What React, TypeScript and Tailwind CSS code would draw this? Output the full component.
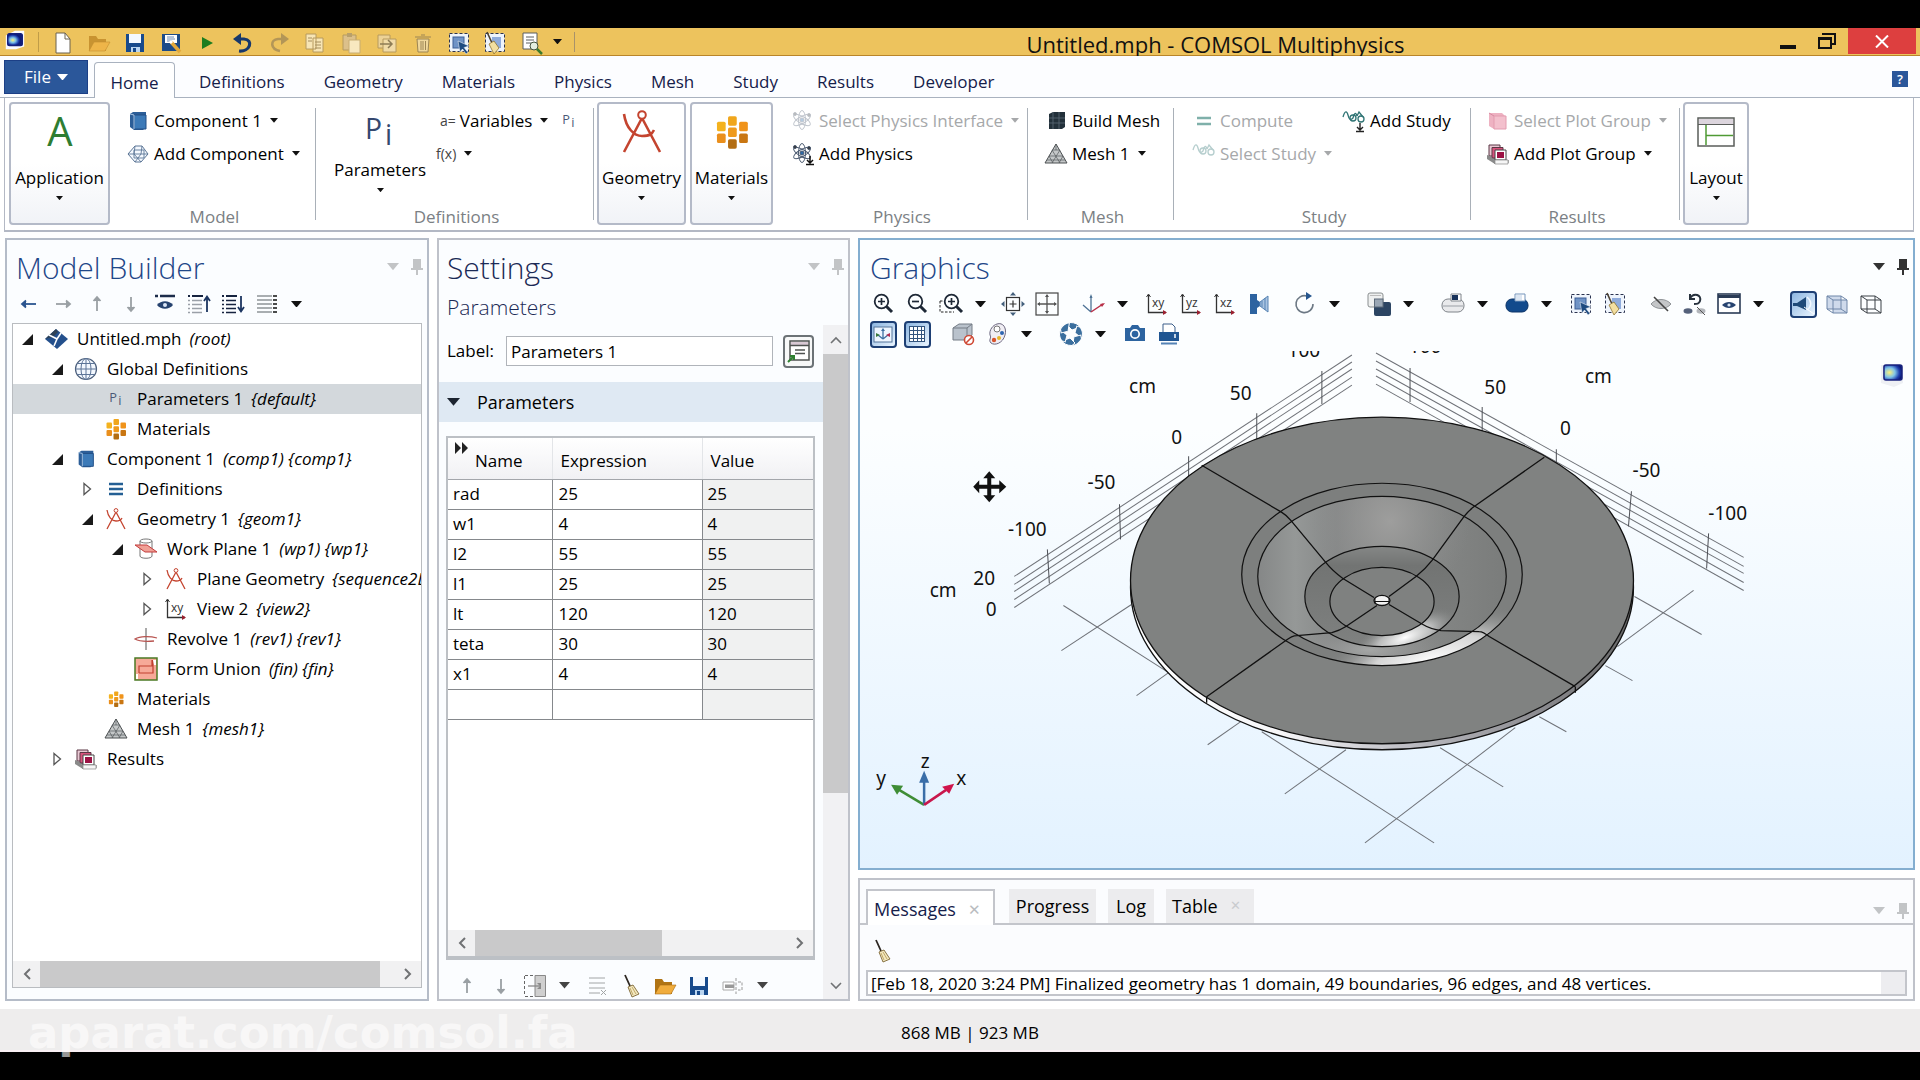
import React from "react";

type Kids = { children?: React.ReactNode };

/* ---------- icon primitives ---------- */

function Ic({ s = 24, children }: Kids & { s?: number }) {
  return (
    <svg width={s} height={s} viewBox="0 0 24 24" fill="none" className="shrink-0 overflow-visible" aria-hidden="true">
      {children}
    </svg>
  );
}

function Caret({ c = "#111", w = 10 }: { c?: string; w?: number }) {
  return (
    <svg width={w} height={w * 0.6} viewBox="0 0 10 6" className="shrink-0" aria-hidden="true">
      <path d="M0 0H10L5 6Z" fill={c} />
    </svg>
  );
}

const iconFont = "Open Sans, sans-serif";

const NewFile = () => (
  <Ic><path d="M5 2H14L19 8V22H5Z" fill="#fff" stroke="#6b6250" /><path d="M14 2V8H19" stroke="#6b6250" /></Ic>
);
const Folder = ({ o = 1 }: { o?: number }) => (
  <Ic><g opacity={o}><path d="M2 5H9L11 8H19V20H2Z" fill="#b07414" /><path d="M7 11H23L18 20H2Z" fill="#f0ac3c" stroke="#a86c10" strokeWidth=".6" /></g></Ic>
);
const Save = () => (
  <Ic><path d="M3 3H21V21H3Z" fill="#174a8c" /><path d="M6 3H18V12H6Z" fill="#f4f9ff" /><path d="M8 16H17V21H8Z" fill="#b9d4f0" /><path d="M10 17H13V21H10Z" fill="#174a8c" /></Ic>
);
const SaveAs = () => (
  <Ic><path d="M3 3H21V20H3Z" fill="#1c4b88" /><path d="M6 4H18V12H6Z" fill="#fff" /><path d="M8 6H15M8 8H16M8 10H13" stroke="#6d8cb5" /><path d="M12 11L21 21" stroke="#e2a83b" strokeWidth="3.5" /><path d="M11 10L13 12" stroke="#fff" strokeWidth="3" /></Ic>
);
const Play = () => (<Ic><path d="M7 6L18 12L7 18Z" fill="#1d7d1f" /></Ic>);
const Undo = () => (
  <Ic><path d="M8 20C19 21 23 9 13 8H7" stroke="#17386c" strokeWidth="3.2" /><path d="M10 2L2 8L10 14Z" fill="#17386c" /></Ic>
);
const Redo = () => (
  <Ic><path d="M13 20C3 18 3 9 11 8H16" stroke="#b39657" strokeWidth="2.6" /><path d="M14 2L22 8L14 14Z" fill="#b39657" /></Ic>
);
const Copy = () => (
  <Ic><path d="M3 3H13V18H3ZM10 7H20V21H10Z" fill="#f7e5b5" stroke="#b69a5e" /><path d="M5 7H9M5 10H9M12 11H18M12 14H18M12 17H18" stroke="#a58e5e" /></Ic>
);
const Paste = () => (
  <Ic><path d="M4 4H17V19H4Z" fill="#dcc08a" stroke="#b69a5e" /><path d="M8 2H13V6H8Z" fill="#b9a06a" /><path d="M10 9H21V22H10Z" fill="#f8e8c0" stroke="#c8ad72" /></Ic>
);
const Insert = () => (
  <Ic><path d="M3 4H15V17H3Z" fill="#ecd296" stroke="#b69a5e" /><path d="M8 8H21V21H8Z" fill="#f1dba7" stroke="#b69a5e" /><path d="M5 13H16M13 9L17 13L13 17" stroke="#8d7c55" strokeWidth="1.5" /></Ic>
);
const Trash = () => (
  <Ic><path d="M6 8H18L17 21H7Z" fill="#efd79b" stroke="#9c8554" /><path d="M4 6H20M10 4H14M10 10V19M12 10V19M14.500 10V19" stroke="#9c8554" /></Ic>
);
const SelectBox = () => (
  <Ic><rect x="2.500" y="2.500" width="19" height="18" fill="#eef4fc" stroke="#2a3350" strokeDasharray="3 2" /><rect x="6" y="6" width="11" height="11" fill="#6f93c6" stroke="#3c5f96" /><path d="M11 10L22 15L17 16.500L21 21.500L19 23L15.500 18L13 21Z" fill="#1d4a80" stroke="#fff" strokeWidth=".5" /></Ic>
);
const ClearSel = () => (
  <Ic><rect x="2.500" y="2.500" width="19" height="18" fill="#eef4fc" stroke="#2a3350" strokeDasharray="3 2" /><rect x="9" y="6" width="9" height="11" fill="#8fabdb" /><path d="M4 1L9 12" stroke="#4a4030" strokeWidth="1.600" /><path d="M6 13L11 10L16 17L11 23Z" fill="#f3dfa0" stroke="#8f7533" strokeWidth=".8" /></Ic>
);
const Find = () => (
  <Ic><path d="M4 2H18V18H4Z" fill="#fff" stroke="#5a5f60" /><path d="M7 6H15M7 9H15M7 12H12" stroke="#5a5f60" /><circle cx="15" cy="15" r="4" fill="#e4eee0" stroke="#43523c" /><path d="M18 18L23 23" stroke="#3c7a2c" strokeWidth="2.500" /></Ic>
);
const AppLogo = ({ s = 24 }: { s?: number }) => (
  <Ic s={s}>
    <defs><radialGradient id="lg" cx=".35" cy=".55"><stop offset="0" stopColor="#fdf07a" /><stop offset=".4" stopColor="#7fc4e8" /><stop offset=".8" stopColor="#1f3fae" /><stop offset="1" stopColor="#0e1c78" /></radialGradient></defs>
    <path d="M2 7L12 2H22V19L13 22H2Z" fill="#fbfbff" /><rect x="4" y="5" width="16" height="13" rx="2" fill="url(#lg)" stroke="#17217c" strokeWidth="1.500" />
  </Ic>
);

const Cube = ({ s = 24 }: { s?: number }) => (
  <Ic s={s}><path d="M4 5L7 3H20V18L17 21H8L4 18Z" fill="#2c5e98" /><path d="M8 6H20V20H8Z" fill="#3c7ab8" stroke="#224f86" /><path d="M4 5L8 6V20" stroke="#a9c6e6" /></Ic>
);
const AddComp = () => (
  <Ic><path d="M2 12L9 4H16L22 12L15 20H9Z" fill="#f5f9ff" stroke="#5c7696" /><path d="M9 4L8 12L15 20M16 4L15 12L9 20M2 12H22M8 8H18V16H8Z" stroke="#5c7696" strokeWidth=".9" /></Ic>
);
const Pi = ({ s = 24, c = "#4a5877" }: { s?: number; c?: string }) => (
  <svg width={s} height={s} viewBox="0 0 24 24" aria-hidden="true" className="shrink-0 overflow-visible">
    <text x="3" y="16" fontSize="17" fill={c} fontFamily={iconFont}>P</text>
    <text x="15" y="20" fontSize="17" fill={c} fontFamily={iconFont}>i</text>
  </svg>
);
const Compass = ({ s = 24 }: { s?: number }) => (
  <Ic s={s}><path d="M12 5L3 22M12 5L21 22M3 3C4 10 8 14 12 14C16 14 17 13 18 11" stroke="#c4442f" strokeWidth="1.300" /><circle cx="12" cy="3.500" r="1.900" fill="#fff" stroke="#c4442f" /></Ic>
);
const Mats = ({ s = 24 }: { s?: number }) => (
  <Ic s={s}>
    <rect x="9.500" y="2" width="5.500" height="6" rx="1" fill="#f0a61c" /><rect x="9.500" y="9.200" width="5.500" height="6" rx="1" fill="#ef9a1c" /><rect x="9.500" y="16.500" width="5.500" height="6" rx="1" fill="#b36d12" />
    <rect x="2.500" y="5.500" width="5.500" height="6" rx="1" fill="#f4b21e" /><rect x="2.500" y="13" width="5.500" height="6" rx="1" fill="#ea8f1c" />
    <rect x="16.500" y="5.500" width="5.500" height="6" rx="1" fill="#f0931a" /><rect x="16.500" y="13" width="5.500" height="6" rx="1" fill="#c97612" />
  </Ic>
);
const Atom = ({ o = 1, add = false }: { o?: number; add?: boolean }) => (
  <Ic><g opacity={o} stroke="#4b5a70" strokeWidth="1"><ellipse cx="11" cy="11" rx="3.500" ry="9.500" /><ellipse cx="11" cy="11" rx="3.500" ry="9.500" transform="rotate(60 11 11)" /><ellipse cx="11" cy="11" rx="3.500" ry="9.500" transform="rotate(120 11 11)" /><circle cx="11" cy="11" r="2" fill="#2c6aa8" /><circle cx="4" cy="5" r="1.500" fill="#333" /><circle cx="18" cy="6" r="1.500" fill="#333" /></g>
    {add && <path d="M19 14V20M16 18L19 21L22 18M15 22.500H23" stroke="#111" strokeWidth="1.500" />}
  </Ic>
);
const BuildMesh = () => (
  <Ic><path d="M5 5L9 3H21V18L18 20H5Z" fill="#22303a" /><path d="M9 3V20M15 3V20M5 9H21M5 14H21" stroke="#5c6b76" strokeWidth=".8" /></Ic>
);
const MeshTri = () => (
  <Ic><path d="M12 2L23 21H1Z" fill="#c4c7c8" stroke="#4c5052" /><path d="M8 8L16 21M16 8L8 21M5 14L9 21M19 14L15 21M8.500 8H15.500M5 14H19M3 18H21M12 2V8" stroke="#55595b" strokeWidth=".7" /></Ic>
);
const Equals = () => (<Ic><path d="M5 9H19M5 15H19" stroke="#7fb0aa" strokeWidth="2.600" /></Ic>);
const Study = ({ o = 1, add = false }: { o?: number; add?: boolean }) => (
  <Ic><g opacity={o} stroke="#2f7474" strokeWidth="1.300"><path d="M1 8C3 1 5 2 6 6S8 12 11 9C12 4 14 3 15 7" /><circle cx="11" cy="9" r="3" /><circle cx="19" cy="10" r="3" /><path d="M15 7L17 3L21 8" /></g>
    {add && <path d="M18 14V20M15 18L18 21L21 18M14 22.500H22" stroke="#222" strokeWidth="1.400" />}
  </Ic>
);
const PlotSel = () => (<Ic><path d="M3 4H16L20 8V20H8L3 17Z" fill="#eeb2c2" /><path d="M8 7H20V20H8Z" fill="#f3c0cd" stroke="#e39cb0" /><path d="M3 4L8 7" stroke="#d88aa2" /></Ic>);
const PlotGroup = () => (
  <Ic><path d="M2 14L8 21H22V18" fill="#999" stroke="#666" /><path d="M3 3H14V14H3Z" fill="#e9c9d4" stroke="#5a3744" /><path d="M6 5.500H17V16H6Z" fill="#d8527c" stroke="#5a3744" /><path d="M9 8H20V18H9Z" fill="#fff" stroke="#444" /><path d="M11 10H18V16H11Z" fill="#9c1244" /><path d="M1 13L4 14L9 19V22L1 17Z" fill="#8a8a8a" /><path d="M9 18H22V22H9Z" fill="#f6f6f6" stroke="#888" strokeWidth=".7" /></Ic>
);
const LayoutIc = () => (
  <svg width="38" height="30" viewBox="0 0 38 30" fill="none" aria-hidden="true"><rect x="1" y="1" width="36" height="28" fill="#fff" stroke="#5a5d5a" strokeWidth="1.500" /><path d="M2 2H36V7H2Z" fill="#dcd5dd" /><path d="M1 7.500H37" stroke="#5a5d5a" /><path d="M9 8V28M9 18.500H36" stroke="#4f9a34" strokeWidth="1.500" /></svg>
);

/* arrows and list icons of the view toolbars */
const Arrow = ({ d, c = "#9aa0a4" }: { d: number; c?: string }) => (
  <Ic><g transform={`rotate(${d} 12 12)`} stroke={c} strokeWidth="1.800"><path d="M5 12H19" /><path d="M9 8.500L5 12L9 15.500" fill={c} /></g></Ic>
);
const EyeBar = () => (
  <Ic><path d="M2 4H5M7 4H22" stroke="#1c2c4a" strokeWidth="2.500" /><path d="M4 13C8 8 16 8 20 13C16 18 8 18 4 13Z" fill="#27436f" /><circle cx="12" cy="13" r="2" fill="#dbe6f5" /></Ic>
);
const ListArrow = ({ up = false }: { up?: boolean }) => (
  <Ic><path d="M1 4H3M5 4H16" stroke="#16233f" strokeWidth="2" /><path d="M1 8.500H3M5 8.500H15M1 12.500H3M5 12.500H15M1 16.500H3M5 16.500H15M1 20.500H3M5 20.500H15" stroke={up ? "#9aa0a8" : "#16233f"} strokeWidth="1.600" /><path d={up ? "M20 20V5M17 9L20 4.500L23 9" : "M20 4V19M17 15L20 19.500L23 15"} stroke="#1c3560" strokeWidth="1.800" /></Ic>
);
const Columns = () => (
  <Ic><path d="M2 4H17M2 8H17M2 12H17M2 16H17M2 20H17" stroke="#8f9498" strokeWidth="1.300" /><path d="M18 4H22M18 8H22M18 12H22M18 16H22M18 20H22" stroke="#111" strokeWidth="1.600" /></Ic>
);

/* tree icons */
const Root = () => (
  <Ic><path d="M1 12L12 2L24 12L13 22Z" fill="#24508c" /><path d="M1 12L12 2L14 5L9 10Z" fill="#2f4257" /><path d="M5 8L13 12L10 19M13 12L17 6" stroke="#fff" strokeWidth="1.600" /></Ic>
);
const Globe = () => (
  <Ic><circle cx="12" cy="12" r="10.500" fill="#f3f8ff" stroke="#4a5d7a" strokeWidth="1.200" /><ellipse cx="12" cy="12" rx="5" ry="10.500" stroke="#5d7598" /><path d="M12 1.500V22.500M1.500 12H22.500M3.500 6.500H20.500M3.500 17.500H20.500" stroke="#5d7598" /></Ic>
);
const Defs = () => (<Ic><path d="M5 7H19M5 12H19M5 17H19" stroke="#245f94" strokeWidth="2.500" /></Ic>);
const WorkPlane = () => (
  <Ic><path d="M6 4V19C6 22 18 22 18 19V4" stroke="#777" /><ellipse cx="12" cy="4" rx="6" ry="2" stroke="#777" /><path d="M1 8H13L23 15H11Z" fill="#f0a096" stroke="#c33c3c" /></Ic>
);
const AxisText = ({ t }: { t: string }) => (
  <Ic><path d="M3.500 3V20.500H21" stroke="#333" strokeWidth="1.300" /><path d="M1.500 5L3.500 2L5.500 5" stroke="#333" /><path d="M18 18L22 20.500L18 23Z" fill="#9c2030" /><text x="7" y="14.500" fontSize="12" fill="#333" fontFamily={iconFont}>{t}</text></Ic>
);
const Revolve = () => (
  <Ic><path d="M12 1V23" stroke="#555" /><path d="M23 11C16 9 6 9 1 12C6 15 14 14.500 20 14" stroke="#b85450" strokeWidth="1.300" /></Ic>
);
const FormUnion = () => (
  <Ic><rect x="1" y="1" width="22" height="22" fill="#f6a998" stroke="#4b7a24" strokeWidth="1.500" /><path d="M5 16V9H18V3M5 16H19V3" stroke="#c0402f" strokeWidth="1.200" /><path d="M19 3H22V8H20ZM2 17H4V22H2Z" fill="#fff" /></Ic>
);

/* settings toolbar */
const InsertCol = () => (
  <Ic><path d="M12 1.500H22.500V22.500H12Z" fill="#cfcfcf" stroke="#888" /><path d="M2 1.500H12M2 22.500H12M1.500 2V22" stroke="#666" strokeDasharray="3 2" /><path d="M5 12H17" stroke="#888" strokeWidth="1.300" /><path d="M14 9H18V15H14L17 12Z" fill="#8a8a8a" /></Ic>
);
const DelRow = () => (<Ic><path d="M4 4H20M4 9H20M4 14H20M4 19H15" stroke="#a2a5a6" /><path d="M16 16L21 21M21 16L16 21" stroke="#a2a5a6" /></Ic>);
const Broom = () => (
  <Ic><path d="M6 1L11 12" stroke="#2c2620" strokeWidth="1.800" /><path d="M9 13L14 11L20 20L13 23Z" fill="#f3e8c0" stroke="#7d6733" strokeWidth=".9" /><path d="M11 14L14 21M13 13L17 20" stroke="#b59851" strokeWidth=".8" /></Ic>
);
const Rename = () => (<Ic><path d="M2 8H13V16H2Z" fill="#fff" stroke="#aaa" /><path d="M4 10.500H13V14H4Z" fill="#999" /><path d="M15 4V20M17 8H21V16H17" stroke="#999" strokeDasharray="3 1.500" /></Ic>);
const FormDesc = () => (
  <Ic><rect x="3" y="2" width="19" height="19" fill="#fff" stroke="#4f5250" strokeWidth="1.500" /><path d="M4 3H21V6H4Z" fill="#d9c9d4" /><path d="M3 6.500H22M8 11H18M8 14.500H18" stroke="#4f5250" strokeWidth="1.300" /><path d="M1 23L6 18M3 17H7V21" stroke="#2f8030" strokeWidth="2" /></Ic>
);

/* graphics toolbar */
const Mag = ({ plus = false, box = false }: { plus?: boolean; box?: boolean }) => (
  <Ic><g transform={box ? "translate(2 0)" : undefined}><circle cx="10.500" cy="9.500" r="6.800" stroke="#1e2836" strokeWidth="1.800" /><path d="M15.500 14.500L21 20" stroke="#1e2836" strokeWidth="3" /><path d={plus ? "M7 9.500H14M10.500 6V13" : "M7 9.500H14"} stroke="#1e2836" strokeWidth="1.700" /></g>{box && <path d="M1 9V20H15M1 9H4" stroke="#222" strokeDasharray="2.500 1.500" />}</Ic>
);
const Extents = () => (
  <Ic><rect x="5.500" y="5.500" width="13" height="13" stroke="#333" strokeWidth="1.200" /><path d="M8.500 12H15.500M12 8.500V15.500" stroke="#333" strokeWidth="1.200" /><path d="M12 0L15 3.500H9ZM12 24L15 20.500H9ZM0 12L3.500 9V15ZM24 12L20.500 9V15Z" fill="#44607c" /></Ic>
);
const Fit = () => (
  <Ic><rect x="1" y="1" width="22" height="22" stroke="#444" strokeWidth="1.200" /><path d="M12 3V21M3 12H21" stroke="#555" strokeWidth="1.300" /><path d="M10 5L12 2L14 5ZM10 19L12 22L14 19ZM5 10L2 12L5 14ZM19 10L22 12L19 14Z" fill="#555" /></Ic>
);
const Axes3 = () => (
  <Ic><path d="M10 20V4M10 20L2 13" stroke="#4f7396" strokeWidth="1.300" /><path d="M8.500 6L10 2L11.500 6Z" fill="#4f7396" /><path d="M10 20L22 12" stroke="#b83048" strokeWidth="1.500" /><path d="M24 11L19 12L21 15Z" fill="#b83048" /></Ic>
);
const CamFlip = () => (<Ic><path d="M3 2H10V8L13 10V14L10 16V22H3Z" fill="#2d63a0" /><path d="M13 10L21 4V20L13 14Z" fill="#a9c4e2" stroke="#5683b3" /><path d="M15 9V15M18 6V18" stroke="#5683b3" /></Ic>);
const Rotate = () => (<Ic><path d="M14 4A8.500 8.500 0 1 0 20 12" stroke="#6c7884" strokeWidth="1.600" /><path d="M13 0L19 4L13 8Z" fill="#26568e" /></Ic>);
const Transp = () => (<Ic><rect x="1" y="1" width="15" height="14" rx="2" fill="#eef0f0" stroke="#8a8f90" /><path d="M3 3.500H14" stroke="#bbb" /><rect x="7" y="10" width="17" height="14" rx="2" fill="#2c4563" /><rect x="7.500" y="7" width="8.500" height="8" fill="#9aa7b5" stroke="#5d6b7a" /></Ic>);
const Clip = ({ dark = false }: { dark?: boolean }) => (
  <Ic><rect x="1" y="7" width="22" height="13" rx="6" fill={dark ? "#124a8c" : "#e9eaec"} stroke={dark ? "#0d3568" : "#7f848a"} /><path d="M10 2H20V9H10Z" fill="#fff" stroke={dark ? "#7595bb" : "#7f848a"} /><path d="M11 3H17V8H11Z" fill={dark ? "#dce6f2" : "#17325a"} />{!dark && <path d="M2 14H22" stroke="#9a9fa5" />}</Ic>
);
const Hide = () => (<Ic><path d="M2 12C7 6 17 6 22 12C17 18 7 18 2 12Z" fill="#c4c6c8" stroke="#909498" /><path d="M5 5L19 19" stroke="#444" strokeWidth="1.600" /></Ic>);
const ResetHide = () => (<Ic><path d="M7 2V7H12M7 6C11 0 19 3 17 9C16 12 14 12 11 12" stroke="#27313d" strokeWidth="2" /><ellipse cx="5" cy="19" rx="4.500" ry="2.800" fill="#55617a" /><ellipse cx="18" cy="19" rx="4.500" ry="2.800" fill="#b3b6bb" /><path d="M14 15L22 23" stroke="#555" /></Ic>);
const ViewEye = () => (<Ic><rect x="1" y="2" width="22" height="19" fill="#fff" stroke="#2a3b55" strokeWidth="1.600" /><path d="M1 3H23V6H1Z" fill="#2a3b55" /><path d="M5 13C9 9 15 9 19 13C15 17 9 17 5 13Z" fill="#27436f" /><circle cx="12" cy="13" r="1.600" fill="#dbe6f5" /></Ic>);
const Light = () => (<Ic><path d="M2 11H6L15 5V18L6 14H2Z" fill="#1f4a78" /><path d="M16 5C21 9 21 14 16 18" stroke="#f2f8ff" strokeWidth="1.500" /><path d="M13 15L23 22" stroke="#fff" /></Ic>);
const CubeWire = ({ fill = false }: { fill?: boolean }) => (
  <Ic><path d="M2 4H16V17H2ZM8 8H22V21H8ZM2 4L8 8M16 4L22 8M16 17L22 21M2 17L8 21" fill={fill ? "#cfdaeb" : "none"} stroke={fill ? "#6e86a8" : "#3b4046"} /></Ic>
);
const AxesTog = () => (<Ic><rect x="3" y="5" width="18" height="15" fill="#eef6ff" stroke="#54759a" /><path d="M12 17V8M12 17L7 13M12 17L17 13" stroke="#3c6ea0" strokeWidth="1.300" /><path d="M10 9L12 6L14 9Z" fill="#3c6ea0" /><path d="M19 11V15L15 13Z" fill="#b02c50" /><path d="M5 11V15L9 13Z" fill="#3c7a3c" /></Ic>);
const GridTog = () => (<Ic><rect x="4.500" y="4.500" width="15" height="15" fill="#fff" stroke="#33557e" /><path d="M4 8.500H20M4 12.500H20M4 16.500H20M8.500 4V20M12.500 4V20M16.500 4V20" stroke="#33557e" strokeWidth="1" /></Ic>);
const NoSel = () => (<Ic><path d="M2 6L8 2H21V13L16 18H2Z" fill="#b9c2cc" stroke="#747c86" /><path d="M2 6H16V18M16 6L21 2" stroke="#747c86" /><circle cx="18" cy="18" r="4.500" fill="#fff" stroke="#cf4a36" strokeWidth="1.600" /><path d="M15 21L21 15" stroke="#cf4a36" strokeWidth="1.600" /></Ic>);
const Palette = () => (<Ic><path d="M12 2C18 0 22 6 20 13C18 21 10 24 6 21C3 18 7 16 5 13C4 8 8 3 12 2Z" fill="#f0eef4" stroke="#6d6880" /><circle cx="12" cy="7" r="3" fill="#fff" stroke="#777" /><circle cx="9" cy="18" r="2.200" fill="#d8542c" /><circle cx="14" cy="16" r="2" fill="#e6b62c" /><circle cx="17" cy="11" r="2" fill="#2f66b0" /></Ic>);
const Aperture = () => (
  <Ic>{[0, 60, 120, 180, 240, 300].map((a) => (<path key={a} d="M11 0.500C16 0.500 19 2 21 5L13 8L8 3Z" transform={`rotate(${a} 12 12)`} fill="#3b6f9e" stroke="#fff" strokeWidth="1" />))}</Ic>
);
const Camera = () => (<Ic><path d="M2 6H7L9 3H15L17 6H22V19H2Z" fill="#2d64a0" /><circle cx="12" cy="12" r="4.200" fill="#2d64a0" stroke="#fff" strokeWidth="1.700" /></Ic>);
const Printer = () => (<Ic><path d="M6 2H15L18 5V11H6Z" fill="#fff" stroke="#3c5f8a" /><path d="M2 10H22V19H2Z" fill="#1f5592" /><path d="M4 21.500H20" stroke="#5583b5" strokeWidth="2" /><path d="M18 12V16" stroke="#fff" strokeWidth="1.500" /></Ic>);

const Pin = ({ c }: { c: string }) => (
  <svg width="12" height="16" viewBox="0 0 12 16" aria-hidden="true"><path d="M2 0H10V9H12V11H7V16H5V11H0V9H2Z" fill={c} /></svg>
);

/* ---------- shared controls ---------- */

function ToolBtn({ label, children, on = false }: Kids & { label: string; on?: boolean }) {
  return (
    <button aria-label={label} className="flex h-7 w-[34px] shrink-0 items-center justify-center">
      {on ? (
        <span className="flex size-[27px] items-center justify-center rounded-sm border-2 border-[#1d3f74] bg-gradient-to-br from-[#8db6e0] to-[#eaf5ff]">{children}</span>
      ) : children}
    </button>
  );
}
const ToolCaret = ({ c }: { c?: string }) => (
  <button aria-label="More" className="flex h-7 w-6 shrink-0 items-center justify-center"><Caret c={c} w={11} /></button>
);

function PanelCorner({ dark = false }: { dark?: boolean }) {
  const c = dark ? "#333" : "#c2c4c6";
  return (
    <div className="flex items-center gap-3">
      <button aria-label="View menu"><Caret c={c} w={12} /></button>
      <button aria-label="Pin view"><Pin c={c} /></button>
    </div>
  );
}

/* ---------- title bar ---------- */

function TitleBar() {
  const tools: [string, React.ReactNode][] = [
    ["New", <NewFile />], ["Open", <Folder o={0.6} />], ["Save", <Save />], ["Save As", <SaveAs />], ["Run", <Play />],
    ["Undo", <Undo />], ["Redo", <Redo />], ["Copy", <Copy />], ["Paste", <Paste />], ["Duplicate", <Insert />],
    ["Delete", <Trash />], ["Select Box", <SelectBox />], ["Clear Selection", <ClearSel />], ["Find", <Find />],
  ];
  return (
    <header className="flex h-7 items-stretch border-b border-[#b98529] bg-[#edc35d]">
      <div className="flex items-center pl-1">
        <span className="flex w-[34px] justify-start pb-1"><AppLogo s={22} /></span>
        <span className="h-5 w-px bg-[#c09c48]" />
        <div className="flex pt-0.5 pl-1.5">
          {tools.map(([n, i]) => (
            <button key={n} aria-label={n} className="flex w-9 items-center justify-center">{i}</button>
          ))}
        </div>
        <button aria-label="Customize toolbar" className="px-1"><Caret w={9} /></button>
        <span className="ml-2 h-5 w-px bg-[#a8926a]" />
      </div>
      <h1 className="flex flex-1 items-center justify-center pt-1.5 pl-[86px] text-[22px] whitespace-nowrap text-[#111]">Untitled.mph - COMSOL Multiphysics</h1>
      <div className="flex items-start justify-end pr-1">
        <button aria-label="Minimize" className="flex h-[26px] w-9 items-center justify-center">
          <svg width="16" height="16" viewBox="0 0 16 16"><path d="M0 12H16V16H0Z" fill="#111" /></svg>
        </button>
        <button aria-label="Restore" className="flex h-[26px] w-[42px] items-center justify-center">
          <svg width="18" height="16" viewBox="0 0 18 16" fill="none"><path d="M4 1H17V11H14" stroke="#111" strokeWidth="2" /><path d="M1 5H13V15H1Z" stroke="#111" strokeWidth="2" /><path d="M1 6H13" stroke="#111" strokeWidth="2" /></svg>
        </button>
        <button aria-label="Close" className="flex h-[26px] w-[68px] items-center justify-center bg-[#dd3f3f]">
          <svg width="14" height="13" viewBox="0 0 14 13"><path d="M1 0.500L13 12.500M13 0.500L1 12.500" stroke="#fff" strokeWidth="2" /></svg>
        </button>
      </div>
    </header>
  );
}

/* ---------- ribbon ---------- */

function RibbonTabs() {
  const tabs = ["Definitions", "Geometry", "Materials", "Physics", "Mesh", "Study", "Results", "Developer"];
  return (
    <nav className="flex h-[42px] items-end border-b border-[#a9b2bf] bg-[#fcfdff] pl-1 text-[17px] text-[#15204a]">
      <button className="mb-[3px] flex h-[34px] w-[84px] items-center justify-center gap-1.5 border border-[#1c3f86] bg-[#2b579a] text-white">
        File <Caret c="#fff" w={11} />
      </button>
      <button className="-mb-px ml-1.5 h-9 w-[81px] rounded-t border border-b-0 border-[#a9b2bf] bg-white pt-1">Home</button>
      <div className="flex h-9 items-center gap-[39px] pt-1.5 pl-6">
        {tabs.map((t) => <button key={t}>{t}</button>)}
      </div>
      <button aria-label="Help" className="mr-3 mb-2.5 ml-auto flex size-4 items-center justify-center bg-[#2b579a] text-[13px] leading-none font-semibold text-white">?</button>
    </nav>
  );
}

function BigButton({ icon, label, cls }: { icon: React.ReactNode; label: string; cls: string }) {
  return (
    <button className={`mt-1 flex h-[123px] shrink-0 flex-col items-center rounded-sm border-2 border-[#b4bac8] bg-gradient-to-b from-white via-white to-[#f1f3f7] pt-0.5 ${cls}`}>
      <span className="flex h-[52px] items-center justify-center">{icon}</span>
      <span className="mt-2 leading-6">{label}</span>
      <span className="flex h-4 items-center"><Caret w={7} /></span>
    </button>
  );
}

function RB({ icon, label, caret = false, off = false }: { icon?: React.ReactNode; label?: string; caret?: boolean; off?: boolean }) {
  return (
    <button disabled={off} aria-label={label ?? "Item"} className={`flex h-[33px] shrink-0 items-center ${off ? "text-[#a6a8aa]" : "text-black"}`}>
      {icon}
      {label && <span className="ml-1 whitespace-nowrap">{label}</span>}
      {caret && <span className="ml-2"><Caret w={8} c={off ? "#a6a8aa" : "#111"} /></span>}
    </button>
  );
}

function Group({ title, cls, inner = "", children }: Kids & { title: string; cls: string; inner?: string }) {
  return (
    <section className="flex shrink-0 items-start">
      <div className={`flex h-[131px] flex-col justify-between pt-1.5 ${cls}`}>
        <div className={`flex ${inner}`}>{children}</div>
        <h2 className="pl-1 text-center leading-6 text-[#7b7f84]">{title}</h2>
      </div>
      <span className="mt-2.5 h-[112px] w-px bg-[#a9b0b8]" />
    </section>
  );
}

function Ribbon() {
  return (
    <div className="ml-1 mr-1.5 flex h-[134px] items-start border-r border-b-2 border-l border-[#b3b8c4] bg-white pl-1 text-[17px]">
      <BigButton cls="w-[101px]" label="Application" icon={<svg width="40" height="44" viewBox="0 0 40 44" className="overflow-visible" aria-hidden="true"><text x="20" y="36" textAnchor="middle" fontSize="40" fill="#2e7d32" fontFamily={iconFont}>A</text></svg>} />
      <Group title="Model" cls="w-[205px]" inner="flex-col items-start pl-4">
        <RB icon={<Cube />} label="Component 1" caret />
        <RB icon={<AddComp />} label="Add Component" caret />
      </Group>
      <Group title="Definitions" cls="w-[277px]">
        <button className="flex w-[118px] flex-col items-center pl-2.5">
          <span className="flex h-12 items-center justify-center pt-2"><Pi s={40} c="#34486f" /></span>
          <span className="mt-1.5 leading-6">Parameters</span>
          <span className="flex h-4 items-center"><Caret w={7} /></span>
        </button>
        <div className="flex flex-col items-start">
          <div className="flex gap-3">
            <RB icon={<span className="pl-1.5 text-[14px] text-[#444]">a=</span>} label="Variables" caret />
            <RB icon={<Pi s={18} />} />
          </div>
          <RB icon={<span className="pl-0.5 text-[14px] text-[#444]">f(x)</span>} caret />
        </div>
      </Group>
      <BigButton cls="ml-[3px] w-[89px]" label="Geometry" icon={<Compass s={48} />} />
      <BigButton cls="ml-1 w-[83px]" label="Materials" icon={<Mats s={38} />} />
      <Group title="Physics" cls="w-[254px]" inner="flex-col items-start pl-[18px]">
        <RB icon={<Atom o={0.35} />} label="Select Physics Interface" caret off />
        <RB icon={<Atom add />} label="Add Physics" />
      </Group>
      <Group title="Mesh" cls="w-[145px]" inner="flex-col items-start pl-4">
        <RB icon={<BuildMesh />} label="Build Mesh" />
        <RB icon={<MeshTri />} label="Mesh 1" caret />
      </Group>
      <Group title="Study" cls="w-[296px]" inner="gap-1.5 pl-[18px]">
        <div className="flex w-36 flex-col items-start">
          <RB icon={<Equals />} label="Compute" off />
          <RB icon={<Study o={0.35} />} label="Select Study" caret off />
        </div>
        <RB icon={<Study add />} label="Add Study" />
      </Group>
      <Group title="Results" cls="w-[208px]" inner="flex-col items-start pl-[15px]">
        <RB icon={<PlotSel />} label="Select Plot Group" caret off />
        <RB icon={<PlotGroup />} label="Add Plot Group" caret />
      </Group>
      <BigButton cls="ml-[3px] w-[66px]" label="Layout" icon={<LayoutIc />} />
    </div>
  );
}

/* ---------- model builder ---------- */

type Node = { l: number; a?: "open" | "closed"; i: React.ReactNode; t: string; n?: string; sel?: boolean };

const nodes: Node[] = [
  { l: 0, a: "open", i: <Root />, t: "Untitled.mph", n: "(root)" },
  { l: 1, a: "open", i: <Globe />, t: "Global Definitions" },
  { l: 2, i: <Pi s={18} />, t: "Parameters 1", n: "{default}", sel: true },
  { l: 2, i: <Mats />, t: "Materials" },
  { l: 1, a: "open", i: <Cube s={22} />, t: "Component 1", n: "(comp1) {comp1}" },
  { l: 2, a: "closed", i: <Defs />, t: "Definitions" },
  { l: 2, a: "open", i: <Compass />, t: "Geometry 1", n: "{geom1}" },
  { l: 3, a: "open", i: <WorkPlane />, t: "Work Plane 1", n: "(wp1) {wp1}" },
  { l: 4, a: "closed", i: <Compass />, t: "Plane Geometry", n: "{sequence2D}" },
  { l: 4, a: "closed", i: <AxisText t="xy" />, t: "View 2", n: "{view2}" },
  { l: 3, i: <Revolve />, t: "Revolve 1", n: "(rev1) {rev1}" },
  { l: 3, i: <FormUnion />, t: "Form Union", n: "(fin) {fin}" },
  { l: 2, i: <Mats s={18} />, t: "Materials" },
  { l: 2, i: <MeshTri />, t: "Mesh 1", n: "{mesh1}" },
  { l: 1, a: "closed", i: <PlotGroup />, t: "Results" },
];

function HScroll({ thumb }: { thumb: string }) {
  return (
    <div className="flex h-[26px] shrink-0 bg-[#f1f1f2]">
      <button aria-label="Scroll left" className="flex w-[27px] items-center justify-center">
        <svg width="8" height="12" viewBox="0 0 8 12" fill="none"><path d="M7 1L2 6L7 11" stroke="#707274" strokeWidth="2" /></svg>
      </button>
      <div className="flex-1"><div className={`h-full bg-[#c9c9ca] ${thumb}`} /></div>
      <button aria-label="Scroll right" className="flex w-[27px] items-center justify-center">
        <svg width="8" height="12" viewBox="0 0 8 12" fill="none"><path d="M1 1L6 6L1 11" stroke="#707274" strokeWidth="2" /></svg>
      </button>
    </div>
  );
}

function ModelBuilder() {
  return (
    <section className="flex w-[424px] shrink-0 flex-col border-2 border-[#b5bcc8] bg-[#fbfdff] pb-[11px]">
      <div className="flex h-[50px] items-center justify-between pt-1 pr-1 pl-[9px]">
        <h2 className="text-[30px] font-light text-[#1f4788]">Model Builder</h2>
        <PanelCorner />
      </div>
      <div className="flex h-[33px] items-start pl-[5px]">
        <ToolBtn label="Back"><Arrow d={0} c="#2b5590" /></ToolBtn>
        <ToolBtn label="Forward"><Arrow d={180} /></ToolBtn>
        <ToolBtn label="Up"><Arrow d={90} /></ToolBtn>
        <ToolBtn label="Down"><Arrow d={270} /></ToolBtn>
        <ToolBtn label="Show"><EyeBar /></ToolBtn>
        <ToolBtn label="Collapse All"><ListArrow up /></ToolBtn>
        <ToolBtn label="Expand All"><ListArrow /></ToolBtn>
        <ToolBtn label="Node Text"><Columns /></ToolBtn>
        <ToolCaret />
      </div>
      <div className="mx-[5px] flex flex-1 flex-col overflow-hidden border border-[#b9bcc0] bg-white">
        <ul className="flex-1">
          {nodes.map((n, k) => (
            <li key={k} className={`flex h-[30px] items-center whitespace-nowrap text-[17px] ${n.sel ? "bg-[#d3d8dc]" : ""}`} style={{ paddingLeft: n.l * 30 }}>
              <span className="flex w-[29px] shrink-0 justify-center">
                {n.a === "open" && <svg width="11" height="11" viewBox="0 0 11 11"><path d="M11 0V11H0Z" fill="#1a1a1a" /></svg>}
                {n.a === "closed" && <svg width="9" height="14" viewBox="0 0 9 14" fill="none"><path d="M1 1.500L7.500 7L1 12.500Z" stroke="#555" strokeWidth="1.300" /></svg>}
              </span>
              <span className="flex w-7 shrink-0 justify-center">{n.i}</span>
              <button className="ml-[7px] leading-7 text-black">{n.t}{n.n && <i className="ml-2">{n.n}</i>}</button>
            </li>
          ))}
        </ul>
        <HScroll thumb="w-[96%]" />
      </div>
    </section>
  );
}

/* ---------- settings ---------- */

const params = [["rad", "25"], ["w1", "4"], ["l2", "55"], ["l1", "25"], ["lt", "120"], ["teta", "30"], ["x1", "4"], ["", ""]];

function Settings() {
  return (
    <section className="flex w-[413px] shrink-0 flex-col border-2 border-[#bfc2ca] bg-[#fbfdff]">
      <div className="flex h-[50px] items-center justify-between pt-1 pr-1 pl-2">
        <h2 className="text-[30px] font-light text-[#1b2a56]">Settings</h2>
        <PanelCorner />
      </div>
      <h3 className="pl-2 text-[21px] leading-[35px] font-light text-[#1b2a56]">Parameters</h3>
      <div className="flex flex-1">
        <div className="flex flex-1 flex-col">
          <div className="mt-2.5 flex h-8 items-center pl-2 text-[17px]">
            <label htmlFor="lbl" className="w-[59px]">Label:</label>
            <input id="lbl" defaultValue="Parameters 1" className="h-[30px] w-[267px] border border-[#b0b4ba] bg-white px-1" />
            <button aria-label="Show label editor" className="ml-2.5 flex h-[33px] w-[31px] items-center justify-center rounded border-2 border-[#6c7276] bg-[#f7f8f8]"><FormDesc /></button>
          </div>
          <button className="mt-[15px] flex h-10 items-center bg-[#dfe9f3] pl-2 text-[18px]"><Caret w={13} c="#1c2430" /><span className="ml-[17px]">Parameters</span></button>
          <div className="mt-3.5 mr-2 ml-[7px] flex flex-1 flex-col border-2 border-b-4 border-[#bcc0c5] bg-white">
            <table className="w-full table-fixed border-collapse text-[17px]">
              <colgroup><col className="w-[104px]" /><col className="w-[150px]" /><col /></colgroup>
              <thead>
                <tr className="h-[41px] bg-gradient-to-b from-white to-[#f1f1f4] text-left">
                  <th className="border-b border-[#a3a6ab] p-0 align-top font-normal"><div className="flex pl-1.5 pt-1"><svg width="14" height="12" viewBox="0 0 14 12" className="shrink-0"><path d="M1 0L7 6L1 12ZM8 0L14 6L8 12Z" fill="#222" /></svg><span className="pt-1.5 pl-[7px]">Name</span></div></th>
                  <th className="border-b border-l border-[#a3a6ab] border-l-[#e3e5e8] p-0 pt-2.5 pl-2 align-top font-normal">Expression</th>
                  <th className="border-b border-l border-[#a3a6ab] border-l-[#e3e5e8] p-0 pt-2.5 pl-2 align-top font-normal">Value</th>
                </tr>
              </thead>
              <tbody>
                {params.map(([n, v], k) => (
                  <tr key={k} className="h-[30px] border-b border-[#85888c]">
                    <td className="p-0 pl-[5px]">{n}</td>
                    <td className="border-l border-[#85888c] p-0 pl-1.5">{v}</td>
                    <td className="border-l border-[#85888c] bg-[#f0f1f1] p-0 pl-[5px]">{v}</td>
                  </tr>
                ))}
              </tbody>
            </table>
            <div className="mt-auto"><HScroll thumb="w-[60%]" /></div>
          </div>
          <div className="flex h-[39px] items-center pt-4 pb-1 pl-[11px]">
            <ToolBtn label="Move Up"><Arrow d={90} /></ToolBtn>
            <ToolBtn label="Move Down"><Arrow d={270} /></ToolBtn>
            <ToolBtn label="Insert"><InsertCol /></ToolBtn>
            <ToolCaret c="#444" /><G1 />
            <ToolBtn label="Delete"><DelRow /></ToolBtn>
            <ToolBtn label="Clear Table"><Broom /></ToolBtn>
            <ToolBtn label="Load"><Folder /></ToolBtn>
            <ToolBtn label="Save"><Save /></ToolBtn>
            <ToolBtn label="Rename"><Rename /></ToolBtn>
            <ToolCaret c="#444" />
          </div>
        </div>
        <div className="flex w-[25px] flex-col bg-[#f1f1f3]">
          <button aria-label="Scroll up" className="flex h-[29px] items-center justify-center"><svg width="12" height="8" viewBox="0 0 12 8" fill="none"><path d="M1 7L6 2L11 7" stroke="#707274" strokeWidth="1.600" /></svg></button>
          <div className="flex-1"><div className="h-[71%] bg-[#c9c9ca]" /></div>
          <button aria-label="Scroll down" className="flex h-[26px] items-center justify-center"><svg width="12" height="8" viewBox="0 0 12 8" fill="none"><path d="M1 1L6 6L11 1" stroke="#707274" strokeWidth="1.600" /></svg></button>
        </div>
      </div>
    </section>
  );
}

/* ---------- graphics ---------- */

const leftWall = [[356, 577], [363, 585], [370, 592], [378, 600], [386, 608]];
const rightWall = [[354, 558], [362, 567], [370, 574], [377, 583], [385, 591]];
const floor = [
  [1064, 606, 1169, 673], [1062, 651, 1132, 605], [1137, 696, 1169, 673], [1208, 745, 1241, 722], [1285, 794, 1346, 750],
  [1365, 843, 1515, 728], [1262, 732, 1434, 843], [1440, 748, 1503, 787], [1539, 717, 1566, 732], [1605, 666, 1632, 681],
  [1634, 597, 1701, 635], [1693, 591, 1617, 647],
];
const ticks = [
  [1322, 372, 1322, 405], [1257, 414, 1257, 446], [1189, 457, 1189, 492], [1120, 505, 1121, 540], [1048, 550, 1050, 584],
  [1410, 369, 1410, 403], [1482, 408, 1482, 441], [1556, 450, 1556, 484], [1631, 492, 1628, 527], [1708, 534, 1706, 569],
];
const labels: [number, number, string][] = [
  [1304, 351, "100"], [1241, 394, "50"], [1177, 438, "0"], [1102, 483, "-50"], [1028, 530, "-100"],
  [985, 579, "20"], [992, 609, "0"], [944, 591, "cm"], [1143, 387, "cm"],
  [1425, 347, "100"], [1495, 388, "50"], [1565, 429, "0"], [1646, 471, "-50"], [1727, 514, "-100"], [1598, 377, "cm"],
  [882, 778, "y"], [926, 761, "z"], [962, 778, "x"],
];

function Scene() {
  return (
    <svg viewBox="861 352 1051 516" className="block h-full w-full" role="img" aria-label="Geometry view">
      <defs>
        <linearGradient id="rim" x1="1131" x2="1634" y1="0" y2="0" gradientUnits="userSpaceOnUse">
          <stop offset="0" stopColor="#fff" /><stop offset=".3" stopColor="#f6f6f8" /><stop offset=".55" stopColor="#bdbdc3" /><stop offset=".8" stopColor="#8e8e93" /><stop offset="1" stopColor="#666" />
        </linearGradient>
        <radialGradient id="lipHi" cx="1430" cy="662" r="120" gradientUnits="userSpaceOnUse" gradientTransform="translate(1430 662) rotate(-14) scale(1 .4) translate(-1430 -662)">
          <stop offset="0" stopColor="#fff" /><stop offset=".5" stopColor="#e4e4e4" stopOpacity=".85" /><stop offset="1" stopColor="#808281" stopOpacity="0" />
        </radialGradient>
        <linearGradient id="cone" x1="1258" x2="1506" y1="0" y2="0" gradientUnits="userSpaceOnUse">
          <stop offset="0" stopColor="#858787" /><stop offset=".15" stopColor="#959897" /><stop offset=".32" stopColor="#858787" /><stop offset=".5" stopColor="#8e8f8e" /><stop offset=".7" stopColor="#848685" /><stop offset="1" stopColor="#7a7c7b" />
        </linearGradient>
        <radialGradient id="coneTop" cx="1390" cy="522" r="80" gradientUnits="userSpaceOnUse"><stop offset="0" stopColor="#9e9e9d" /><stop offset="1" stopColor="#8b8c8c" stopOpacity="0" /></radialGradient>
        <radialGradient id="coneBot" cx="1370" cy="650" r="80" gradientUnits="userSpaceOnUse" gradientTransform="translate(0 455) scale(1 .3)"><stop offset="0" stopColor="#a5a7a6" /><stop offset="1" stopColor="#8b8c8c" stopOpacity="0" /></radialGradient>
        <linearGradient id="bowl" x1="0" x2="0" y1="546" y2="647" gradientUnits="userSpaceOnUse"><stop offset="0" stopColor="#868887" /><stop offset=".2" stopColor="#727473" /><stop offset="1" stopColor="#7f8180" /></linearGradient>
        <radialGradient id="bowlHi" cx="1405" cy="638" r="58" gradientUnits="userSpaceOnUse" gradientTransform="translate(1405 638) rotate(-22) scale(1 .38) translate(-1405 -638)"><stop offset="0" stopColor="#fff" /><stop offset=".5" stopColor="#d5d6d6" stopOpacity=".7" /><stop offset="1" stopColor="#808281" stopOpacity="0" /></radialGradient>
        <radialGradient id="logo" cx=".3" cy=".5" r=".7"><stop offset="0" stopColor="#fdf07a" /><stop offset=".45" stopColor="#7fc4e8" /><stop offset=".8" stopColor="#1f3fae" /><stop offset="1" stopColor="#0e1c78" /></radialGradient>
      </defs>

      <g stroke="#6f7278" strokeWidth="1">
        {leftWall.map(([a, b]) => <line key={a} x1="1352" y1={a} x2="1015" y2={b} />)}
        {rightWall.map(([a, b]) => <line key={a} x1="1376" y1={a} x2="1743" y2={b} />)}
        {floor.map(([a, b, c, d], k) => <line key={k} x1={a} y1={b} x2={c} y2={d} />)}
        {ticks.map(([a, b, c, d], k) => <line key={k} x1={a} y1={b} x2={c} y2={d} stroke="#4d5056" />)}
      </g>

      <ellipse cx="1382" cy="588" rx="251" ry="162" fill="url(#rim)" stroke="#111" strokeWidth="1.300" />
      <ellipse cx="1382" cy="581" rx="251" ry="163" fill="#808281" stroke="#111" strokeWidth="1.300" />
      <g stroke="#111" strokeWidth="1.200">
        <ellipse cx="1382" cy="575" rx="140" ry="91" fill="#7d7f7e" stroke="none" />
        <ellipse cx="1382" cy="575" rx="140" ry="91" fill="url(#lipHi)" />
        <ellipse cx="1382" cy="577" rx="124" ry="80" fill="url(#cone)" stroke="none" />
        <ellipse cx="1382" cy="577" rx="124" ry="80" fill="url(#coneTop)" stroke="none" />
        <ellipse cx="1382" cy="577" rx="124" ry="80" fill="url(#coneBot)" />
        <ellipse cx="1382" cy="597" rx="77" ry="50" fill="url(#bowl)" stroke="none" />
        <ellipse cx="1382" cy="597" rx="77" ry="50" fill="url(#bowlHi)" />
        <ellipse cx="1382" cy="602" rx="52" ry="34" fill="#7f8180" />
      </g>
      <g fill="none" stroke="#111" strokeWidth="1.300">
        <path d="M1202 466L1282 513Q1287 516 1291 521L1325 562Q1333 572 1343 579L1374 598" />
        <path d="M1544 458L1473 508Q1468 512 1464 517L1432 561Q1425 570 1416 577L1389 597" />
        <path d="M1207 697L1286 641Q1292 636 1297 636L1332 633Q1340 631 1346 627L1377 606" />
        <path d="M1575 687L1489 637Q1483 632 1479 632L1441 631Q1431 630 1421 624L1389 605" />
        <path d="M1207 697V703M1575 687V693" />
      </g>
      <ellipse cx="1382" cy="601" rx="8" ry="5" fill="#f2f2f2" stroke="#111" strokeWidth="1.300" />
      <path d="M1375 599V604M1389 599V604M1375 602H1389" stroke="#111" />

      {labels.map(([x, y, t]) => (
        <text key={`${x}-${y}`} x={x} y={y + 7} textAnchor="middle" fontSize="19" fill="#111" fontFamily="Noto Sans, Open Sans, sans-serif">{t}</text>
      ))}

      <g strokeWidth="2.500">
        <path d="M925 805L900 790" stroke="#3f8d36" /><path d="M892 785L904 786L898 795Z" fill="#3f8d36" />
        <path d="M925 805V782" stroke="#3a6ea8" /><path d="M925 771L930 783H920Z" fill="#3a6ea8" />
        <path d="M925 805L947 790" stroke="#c8174c" /><path d="M955 784L950 794L943 787Z" fill="#d0144c" />
      </g>

      <path d="M990 472L996 479H992V485.500H1000V481L1007 487.500L1000 494V489.500H992V496H996L990 503L984 496H988V489.500H980V494L974 487.500L980 481V485.500H988V479H984Z" fill="#111" />

      <path d="M1880 366H1902V384L1893 388L1880 384Z" fill="#eef0f4" />
      <rect x="1883" y="366" width="18" height="15" rx="2" fill="url(#logo)" stroke="#17217c" strokeWidth="1.500" />
    </svg>
  );
}

const G1 = () => <span className="w-1 shrink-0" />;
const G2 = () => <span className="w-1.5 shrink-0" />;
const G3 = () => <span className="w-3 shrink-0" />;
const G4 = () => <span className="w-4 shrink-0" />;

function Graphics() {
  return (
    <section className="flex flex-1 flex-col border-2 border-[#84aed0] bg-gradient-to-b from-[#fcfeff] from-30% to-[#e3f2ff]">
      <div className="flex h-[50px] items-center justify-between pt-1 pr-1 pl-2.5">
        <h2 className="text-[30px] font-light text-[#1f4788]">Graphics</h2>
        <PanelCorner dark />
      </div>
      <div className="flex h-7 items-center pl-1.5">
        <ToolBtn label="Zoom In"><Mag plus /></ToolBtn><ToolBtn label="Zoom Out"><Mag /></ToolBtn><ToolBtn label="Zoom Box"><Mag plus box /></ToolBtn><ToolCaret /><G1 />
        <ToolBtn label="Zoom Extents"><Extents /></ToolBtn><ToolBtn label="Zoom Selected"><Fit /></ToolBtn><G3 />
        <ToolBtn label="Default View"><Axes3 /></ToolBtn><ToolCaret /><G2 />
        <ToolBtn label="XY View"><AxisText t="xy" /></ToolBtn><ToolBtn label="YZ View"><AxisText t="yz" /></ToolBtn><ToolBtn label="XZ View"><AxisText t="xz" /></ToolBtn><ToolBtn label="Projection"><CamFlip /></ToolBtn><G3 />
        <ToolBtn label="Rotate"><Rotate /></ToolBtn><ToolCaret /><G4 />
        <ToolBtn label="Transparency"><Transp /></ToolBtn><ToolCaret /><G4 />
        <ToolBtn label="Clip"><Clip /></ToolBtn><ToolCaret /><G2 />
        <ToolBtn label="Clip Active"><Clip dark /></ToolBtn><ToolCaret /><G2 />
        <ToolBtn label="Select Box"><SelectBox /></ToolBtn><ToolBtn label="Deselect Box"><ClearSel /></ToolBtn><G3 />
        <ToolBtn label="Hide"><Hide /></ToolBtn><ToolBtn label="Reset Hiding"><ResetHide /></ToolBtn><ToolBtn label="View Hidden"><ViewEye /></ToolBtn><ToolCaret /><G4 />
        <ToolBtn label="Scene Light" on><Light /></ToolBtn><ToolBtn label="Show Transparency"><CubeWire fill /></ToolBtn><ToolBtn label="Wireframe"><CubeWire /></ToolBtn>
      </div>
      <div className="flex h-[33px] items-start pt-0.5 pl-1.5">
        <ToolBtn label="Show Axes" on><AxesTog /></ToolBtn><ToolBtn label="Show Grid" on><GridTog /></ToolBtn><G3 />
        <ToolBtn label="No Selection"><NoSel /></ToolBtn><ToolBtn label="Color"><Palette /></ToolBtn><ToolCaret /><G4 />
        <ToolBtn label="Image Settings"><Aperture /></ToolBtn><ToolCaret /><G2 />
        <ToolBtn label="Snapshot"><Camera /></ToolBtn><ToolBtn label="Print"><Printer /></ToolBtn>
      </div>
      <div className="min-h-0 flex-1 overflow-hidden"><Scene /></div>
    </section>
  );
}

/* ---------- messages ---------- */

function Messages() {
  return (
    <section className="flex h-[123px] shrink-0 flex-col border-2 border-[#bfc2ca] bg-[#fbfcfe]">
      <div className="flex h-[45px] items-end border-b-2 border-[#c3c5cb] pl-1.5 text-[18px]">
        <button className="-mb-0.5 flex h-9 w-[129px] items-center gap-3 border-2 border-b-0 border-[#c3c5cb] bg-white pt-0.5 pl-1.5 text-[#15204a]">Messages <span className="text-[15px] text-[#b9bcc0]">✕</span></button>
        <button className="ml-3.5 h-[34px] w-[87px] bg-[#ececee]">Progress</button>
        <button className="ml-3 h-[34px] w-[46px] bg-[#ececee]">Log</button>
        <button className="ml-3 flex h-[34px] w-[88px] items-center gap-3 bg-[#ececee] pl-1.5">Table <span className="text-[13px] text-[#c9cbce]">✕</span></button>
        <div className="mr-1 mb-1 ml-auto"><PanelCorner /></div>
      </div>
      <div className="flex h-[45px] items-center pt-1.5 pl-[5px]"><ToolBtn label="Clear"><Broom /></ToolBtn></div>
      <div className="mx-1.5 flex h-[26px] items-center justify-between border-2 border-[#c3c5cb] bg-white pl-[3px] text-[17px]">
        <p className="pt-0.5 whitespace-nowrap text-black">[Feb 18, 2020 3:24 PM] Finalized geometry has 1 domain, 49 boundaries, 96 edges, and 48 vertices.</p>
        <span className="h-full w-6 bg-[#ededf0]" />
      </div>
    </section>
  );
}

export default function App() {
  return (
    <div className="relative flex min-h-screen flex-col bg-black font-['Open_Sans','Noto_Sans',sans-serif]">
      <div className="h-7 shrink-0" />
      <div className="flex flex-1 flex-col bg-white">
        <TitleBar />
        <RibbonTabs />
        <Ribbon />
        <main className="mx-[5px] mt-1.5 mb-2 flex flex-1 gap-2">
          <ModelBuilder />
          <Settings />
          <div className="flex min-w-0 flex-1 flex-col gap-2">
            <Graphics />
            <Messages />
          </div>
        </main>
        <footer className="flex h-[43px] items-center border-b-2 border-[#faf0f4] bg-[#eeeded] text-[17px]">
          <p className="pt-1.5 pl-[901px]">868 MB | 923 MB</p>
        </footer>
      </div>
      <div className="h-7 shrink-0" />
      <p className="absolute bottom-5 left-7 font-['DejaVu_Sans',sans-serif] text-[45px] leading-[54px] font-bold text-white/60">aparat.com/comsol.fa</p>
    </div>
  );
}
